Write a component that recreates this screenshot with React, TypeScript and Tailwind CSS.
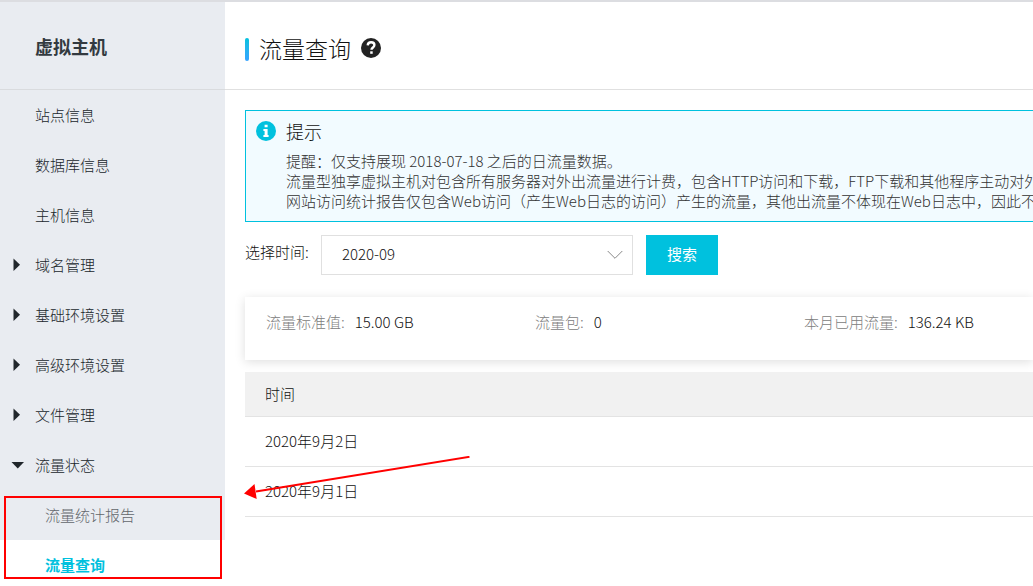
import React, { useState } from 'react';

interface NavItem {
  label: string;
  state?: 'closed' | 'open';
}

const NAV_ITEMS: NavItem[] = [
  { label: '站点信息' },
  { label: '数据库信息' },
  { label: '主机信息' },
  { label: '域名管理', state: 'closed' },
  { label: '基础环境设置', state: 'closed' },
  { label: '高级环境设置', state: 'closed' },
  { label: '文件管理', state: 'closed' },
  { label: '流量状态', state: 'open' },
];

const STATS = [
  { label: '流量标准值:', value: '15.00 GB' },
  { label: '流量包:', value: '0' },
  { label: '本月已用流量:', value: '136.24 KB' },
];

const DAYS = ['2020年9月2日', '2020年9月1日'];

const Caret: React.FC<{ open: boolean }> = ({ open }) => (
  <svg viewBox="0 0 14 14" className="h-3.5 w-3.5" fill="currentColor" aria-hidden="true">
    {open ? <path d="M0.5 4h12.5L6.75 10.5z" /> : <path d="M2.5 0.5v12.5L9 6.75z" />}
  </svg>
);

const Sidebar: React.FC = () => (
  <aside className="w-[225px] shrink-0 text-[#20262b]">
    <div className="flex h-[88px] items-center border-b border-[#d9dbde] bg-[#e9ecf1] pt-[2px] pl-[35px]">
      <h2 className="text-[18px] font-bold text-[#333a40]">虚拟主机</h2>
    </div>
    <nav>
      {NAV_ITEMS.map((item) => (
        <a key={item.label} href="#" className="flex h-[50px] items-center bg-[#e9ecf1] pl-[11px]">
          <span className="w-6">{item.state && <Caret open={item.state === 'open'} />}</span>
          {item.label}
        </a>
      ))}
      {/* Children of 流量状态, boxed in red */}
      <div className="relative">
        <a href="#" className="flex h-[50px] items-center bg-[#e9ecf1] pl-[45px] text-[#62666b]">
          流量统计报告
        </a>
        <a href="#" className="flex h-[50px] items-center bg-white pl-[45px] font-bold text-[#00c1de]">
          流量查询
        </a>
        <div className="pointer-events-none absolute top-[6px] right-[3px] bottom-[11px] left-1 border-2 border-[#f00]" />
      </div>
    </nav>
  </aside>
);

const Notice: React.FC = () => (
  <section className="flex gap-[10px] border border-r-0 border-[#00c1de] bg-[#f2fbff] py-[10px] pl-[10px]">
    <svg viewBox="0 0 20 20" className="h-5 w-5 shrink-0" aria-hidden="true">
      <circle cx="10" cy="10" r="10" fill="#00c1de" />
      <path d="M8.6 3.8h3v2.5h-3zM7.4 8.1h4.2v5.9h1v2H7.4v-2h1.2v-3.9H7.4z" fill="#fff" />
    </svg>
    <div className="min-w-0 whitespace-nowrap">
      <h3 className="mb-[10px] text-[18px] leading-5 text-[#111]">提示</h3>
      <div className="leading-5 text-[#333]">
        <p>提醒：仅支持展现 2018-07-18 之后的日流量数据。</p>
        <p>流量型独享虚拟主机对包含所有服务器对外出流量进行计费，包含HTTP访问和下载，FTP下载和其他程序主动对外</p>
        <p>网站访问统计报告仅包含Web访问（产生Web日志的访问）产生的流量，其他出流量不体现在Web日志中，因此不</p>
      </div>
    </div>
  </section>
);

const App: React.FC = () => {
  const [month, setMonth] = useState('2020-09');

  return (
    <div className="flex h-screen overflow-hidden border-t-2 border-[#dcdde1] bg-white font-['Noto_Sans_CJK_SC',sans-serif] text-[15px] font-light text-[#111]">
      <Sidebar />

      <main className="min-w-0 flex-1">
        <header className="flex h-[88px] items-center border-b border-[#e0e0e0] pt-2 pl-5">
          <span className="h-[23px] w-1 rounded-sm bg-gradient-to-b from-[#00c1de] to-[#36a3ff]" />
          <div className="flex items-center gap-[10px] pb-1 pl-[10px]">
            <h1 className="text-[23px] leading-8">流量查询</h1>
            <button type="button" aria-label="帮助">
              <svg viewBox="0 0 20 20" className="h-5 w-5" aria-hidden="true">
                <circle cx="10" cy="10" r="10" fill="#222" />
                <path
                  d="M6.7 7.4C6.9 5.3 8.2 4.3 10.1 4.3c2 0 3.3 1.1 3.3 2.8 0 2.4-2.9 2.3-2.9 4.7"
                  fill="none"
                  stroke="#fff"
                  strokeWidth="2.4"
                />
                <path d="M9.2 13.3h2.5v2.5H9.2z" fill="#fff" />
              </svg>
            </button>
          </div>
        </header>

        <div className="pt-5 pl-5">
          <Notice />

          <form className="mt-[13px] flex" onSubmit={(e) => e.preventDefault()}>
            <label htmlFor="month" className="w-[76px] leading-[34px]">
              选择时间:
            </label>
            <div className="relative w-[312px]">
              <select
                id="month"
                value={month}
                onChange={(e) => setMonth(e.target.value)}
                className="h-10 w-full appearance-none border border-[#e0e0e0] bg-white px-5 pb-[2px]"
              >
                <option value="2020-09">2020-09</option>
              </select>
              <svg
                viewBox="0 0 16 10"
                className="pointer-events-none absolute top-[15px] right-[10px] h-[10px] w-4"
                fill="none"
                stroke="#888"
                aria-hidden="true"
              >
                <path d="M0.7 1L8 8.3L15.3 1" />
              </svg>
            </div>
            <button type="submit" className="ml-[13px] h-10 w-[72px] bg-[#00c1de] pb-[2px] font-normal text-white">
              搜索
            </button>
          </form>

          <dl className="mt-[22px] grid h-[63px] grid-cols-[269px_269px_1fr] pt-[14px] pl-[21px] shadow-[0_2px_10px_rgba(0,0,0,0.13)]">
            {STATS.map((stat) => (
              <div key={stat.label} className="flex gap-[10px] whitespace-nowrap">
                <dt className="text-[#808080]">{stat.label}</dt>
                <dd>{stat.value}</dd>
              </div>
            ))}
          </dl>

          <div className="relative mt-3">
            <table className="w-full border-separate border-spacing-0 text-left">
              <thead>
                <tr className="h-[45px] bg-[#f1f1f1]">
                  <th className="border-b border-[#e3e3e3] pl-5 font-light">时间</th>
                </tr>
              </thead>
              <tbody>
                {DAYS.map((day) => (
                  <tr key={day} className="h-[50px]">
                    <td className="border-b border-[#e3e3e3] pl-5">{day}</td>
                  </tr>
                ))}
              </tbody>
            </table>
            {/* Arrow pointing back at the menu */}
            <svg
              viewBox="0 0 226 44"
              className="pointer-events-none absolute top-[84px] -left-px h-11 w-[226px]"
              aria-hidden="true"
            >
              <path d="M12 35.5L225.5 0.8" stroke="#f00" strokeWidth="2" />
              <path d="M0 37.5L10.5 28L12.7 43z" fill="#f00" />
            </svg>
          </div>
        </div>
      </main>
    </div>
  );
};

export default App;
